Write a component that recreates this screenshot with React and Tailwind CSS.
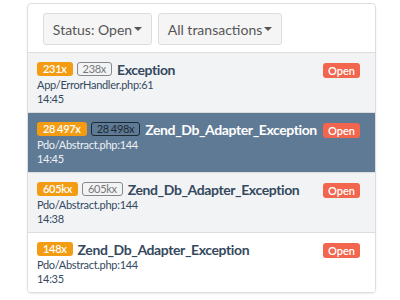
const issues = [
  {
    count: '231x',
    total: '238x',
    title: 'Exception',
    file: 'App/ErrorHandler.php:61',
    time: '14:45',
    bg: 'bg-[#f2f3f5]',
  },
  {
    count: '28 497x',
    total: '28 498x',
    title: 'Zend_Db_Adapter_Exception',
    file: 'Pdo/Abstract.php:144',
    time: '14:45',
    active: true,
  },
  {
    count: '605kx',
    total: '605kx',
    title: 'Zend_Db_Adapter_Exception',
    file: 'Pdo/Abstract.php:144',
    time: '14:38',
    bg: 'bg-[#f2f3f5]',
  },
  {
    count: '148x',
    title: 'Zend_Db_Adapter_Exception',
    file: 'Pdo/Abstract.php:144',
    time: '14:35',
    bg: 'bg-white',
  },
]

function Caret() {
  return <span className="ml-[2px] inline-block h-0 w-0 border-x-[4px] border-t-[4px] border-x-transparent border-t-[#555] align-middle" />
}

function Row({ issue }) {
  const active = issue.active
  return (
    <div className={`flex border-t border-[#ddd] pb-[6px] pl-[9px] pr-[15px] pt-[7px] ${active ? 'bg-[#5f7a95]' : issue.bg}`}>
      <div className="min-w-0 flex-1">
        <div className="flex h-[18px] items-center whitespace-nowrap">
          <span className="shrink-0 rounded-[3px] bg-[#f39c12] px-[6px] text-[11px] font-semibold leading-[14px] tracking-[-0.3px] text-white [word-spacing:-0.5px]">{issue.count}</span>
          {issue.total && (
            <span className={`ml-[4px] shrink-0 rounded-[3px] border px-[5px] text-[11px] leading-[12px] tracking-[-0.3px] [word-spacing:-0.5px] ${active ? 'border-[#1c2833] text-[#1c2833]' : 'border-[#888] text-[#777]'}`}>
              {issue.total}
            </span>
          )}
          <span className={`ml-[5px] text-[14px] font-bold tracking-[-0.4px] ${active ? 'text-white' : 'text-[#34495e]'}`}>{issue.title}</span>
        </div>
        <div className={`text-[11px] leading-[14px] tracking-[-0.3px] ${active ? 'text-[#eef2f5]' : 'text-[#34495e]'}`}>{issue.file}</div>
        <div className={`text-[11px] leading-[14px] tracking-[-0.3px] ${active ? 'text-[#eef2f5]' : 'text-[#34495e]'}`}>{issue.time}</div>
      </div>
      <div className="-mt-[3px] shrink-0">
        <span className="inline-block rounded-[3px] bg-[#f2654f] px-[5px] text-[11px] font-semibold leading-[15px] text-white">Open</span>
      </div>
    </div>
  )
}

export default function App() {
  return (
    <div className="h-[300px] w-[400px] bg-white pl-[27px] pt-[3px] font-['Lato',sans-serif]">
      <div className="w-[349px] overflow-hidden rounded-[4px] border border-[#ddd] shadow-[0_1px_2px_rgba(0,0,0,0.08)]">
        <div className="flex gap-[6px] px-[15px] pb-[7px] pt-[9px]">
          <button className="flex h-[32px] w-[109px] items-center justify-center rounded-[3px] border border-[#ddd] bg-[#f5f5f5] text-[14px] text-[#555]">
            Status: Open<Caret />
          </button>
          <button className="flex h-[32px] w-[124px] items-center justify-center rounded-[3px] border border-[#ddd] bg-[#f5f5f5] text-[14px] text-[#555]">
            All transactions<Caret />
          </button>
        </div>
        {issues.map((issue, i) => (
          <Row key={i} issue={issue} />
        ))}
      </div>
    </div>
  )
}
